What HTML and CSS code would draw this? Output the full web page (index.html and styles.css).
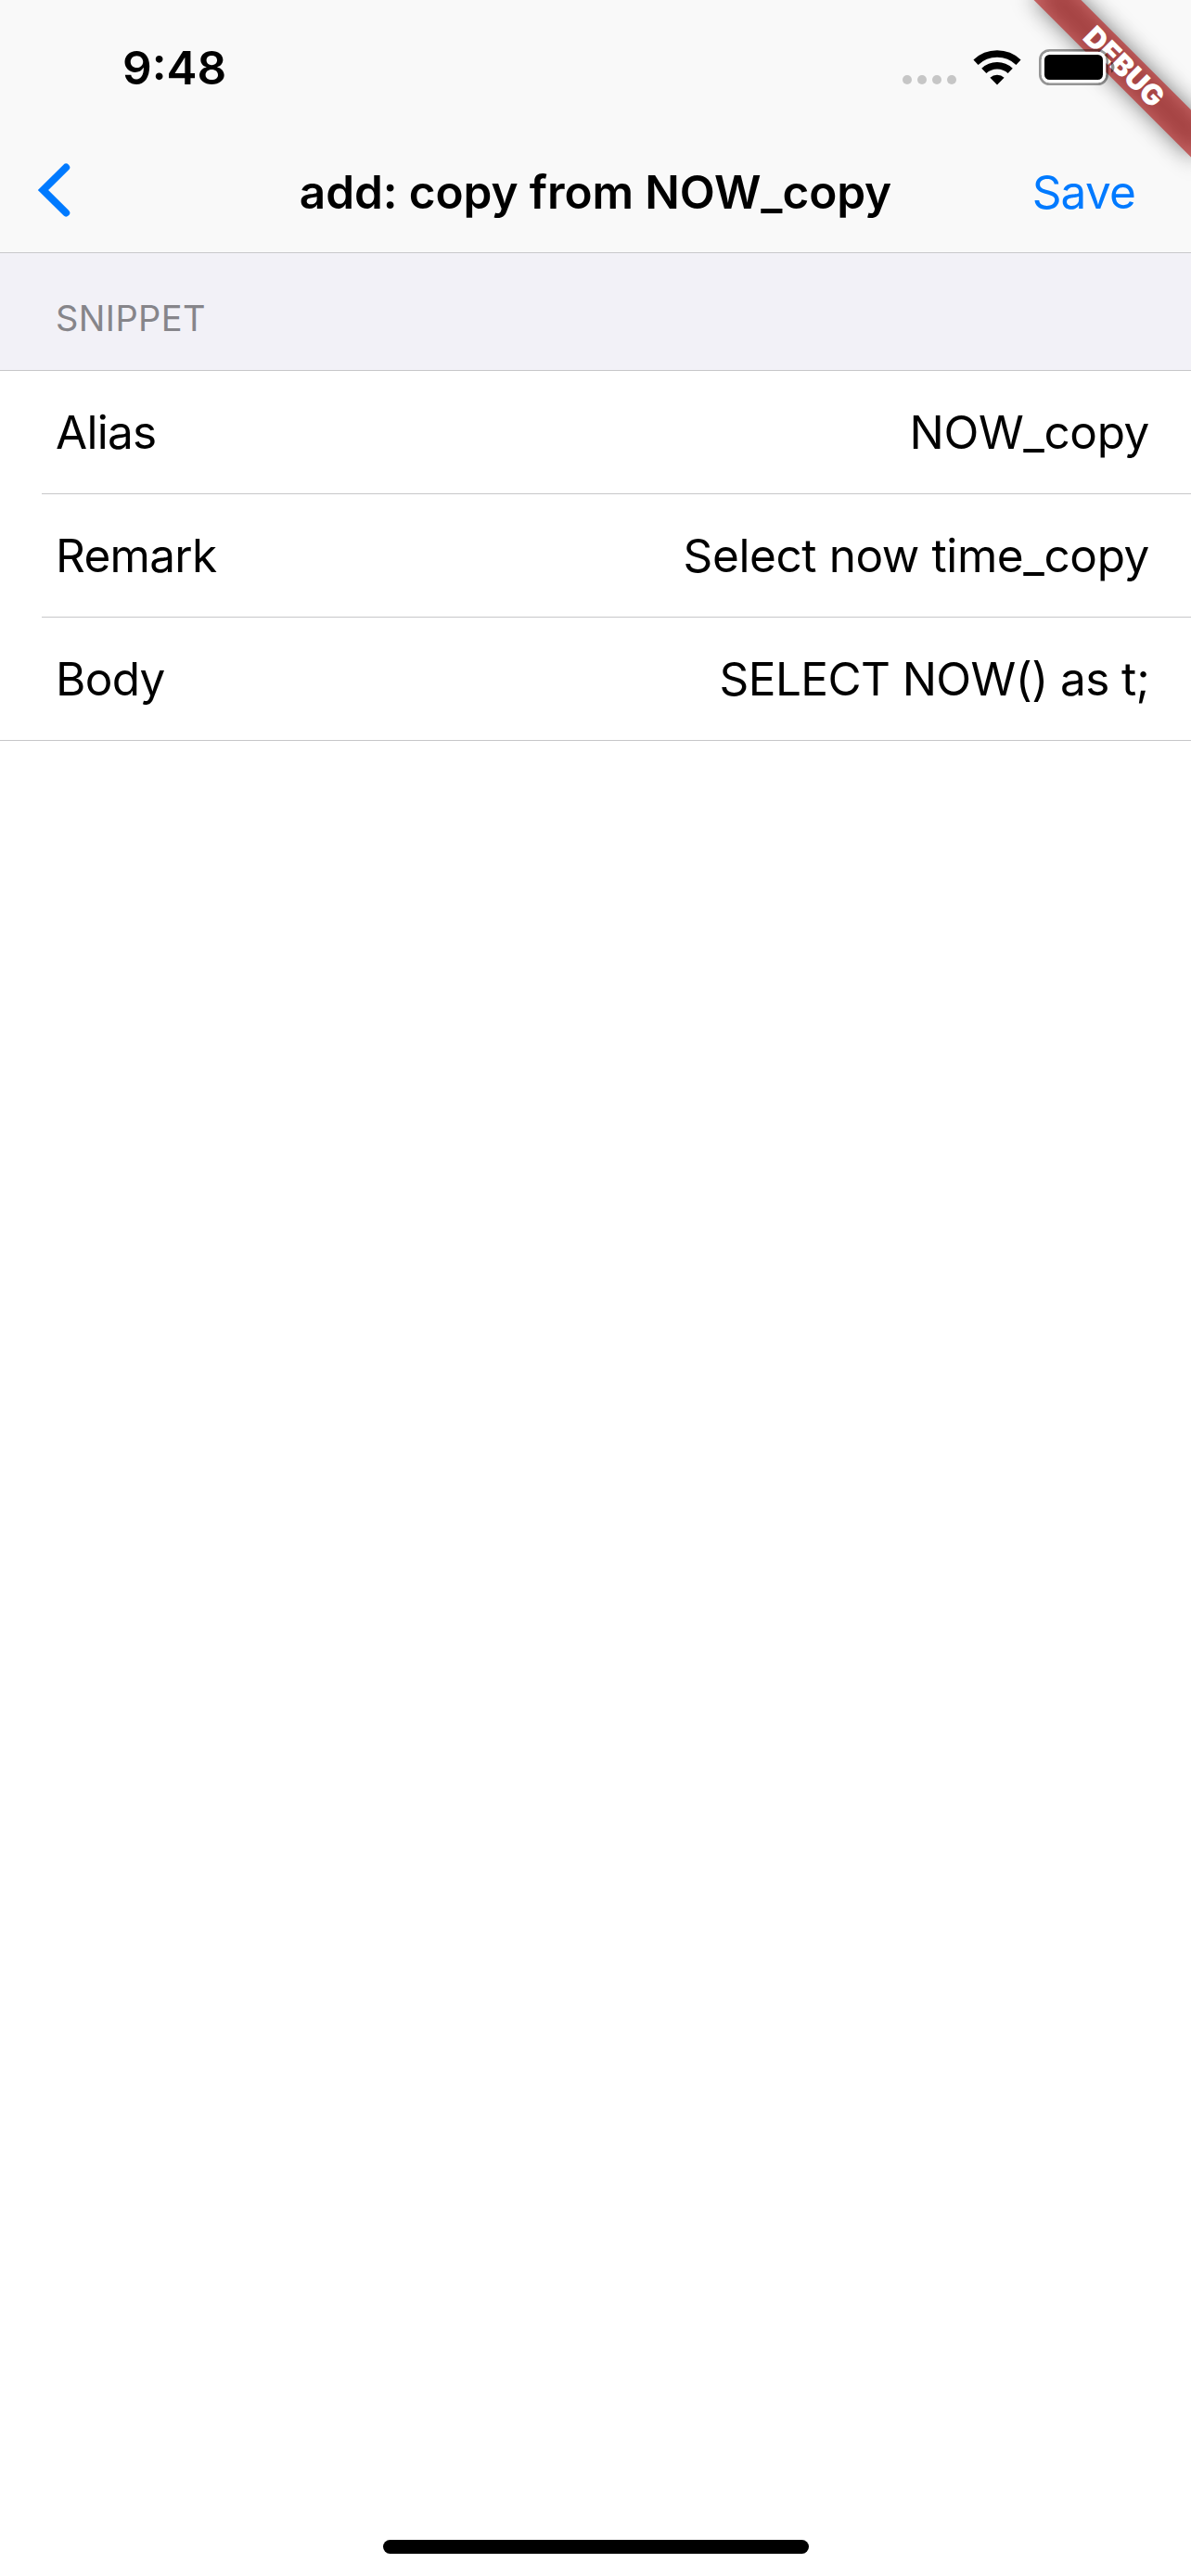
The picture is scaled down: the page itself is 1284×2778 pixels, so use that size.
FILE: index.html
```html
<!DOCTYPE html>
<html lang="en">
<head>
    <meta charset="UTF-8">
    <meta name="viewport" content="width=device-width, initial-scale=1.0">
    <title>add: copy from NOW_copy</title>
    <link rel="stylesheet" href="styles.css">
</head>
<body>
    <div class="screen">
        <header class="top">
            <div class="status-bar">
                <span class="time">9:48</span>
                <div class="status-icons">
                    <svg class="dots" width="58" height="10" viewBox="0 0 58 10" fill="#c6c6c6">
                        <circle cx="5" cy="5" r="5"/>
                        <circle cx="21" cy="5" r="5"/>
                        <circle cx="37" cy="5" r="5"/>
                        <circle cx="53" cy="5" r="5"/>
                    </svg>
                    <svg class="wifi" width="52" height="38" viewBox="0 0 52 38">
                        <path d="M3 13.2a33.4 33.4 0 0 1 46 0M11.8 22.4a20.6 20.6 0 0 1 28.4 0" fill="none" stroke="#000" stroke-width="7.4"/>
                        <path d="M26 37.6l-7.6-7.8a11 11 0 0 1 15.2 0z"/>
                    </svg>
                    <svg class="battery" width="84" height="40" viewBox="0 0 84 40">
                        <rect x="1.4" y="1.4" width="72.2" height="36.2" rx="10" fill="none" stroke="#000" stroke-opacity=".4" stroke-width="2.8"/>
                        <rect x="2.800" y="2.800" width="69.400" height="33.400" rx="8.600" fill="#fff"/>
                        <rect x="6" y="6" width="63" height="27" rx="5.5"/>
                        <path d="M78 13.500c2.400 1 3.500 3.500 3.500 6s-1.100 5-3.500 6z" fill-opacity=".45"/>
                    </svg>
                </div>
            </div>
            <nav class="nav-bar">
                <a class="back" href="#" aria-label="Back">
                    <svg width="36" height="60" viewBox="0 0 36 60">
                        <path d="M31.200 5.500L6.500 30l24.700 24.500" fill="none" stroke="#007aff" stroke-width="8" stroke-linecap="round"/>
                    </svg>
                </a>
                <h1>add: copy from NOW_copy</h1>
                <a class="save" href="#">Save</a>
            </nav>
        </header>

        <h2 class="section-title">SNIPPET</h2>

        <ul class="fields">
            <li class="field">
                <span class="label">Alias</span>
                <span class="value">NOW_copy</span>
            </li>
            <li class="field">
                <span class="label">Remark</span>
                <span class="value">Select now time_copy</span>
            </li>
            <li class="field">
                <span class="label">Body</span>
                <span class="value value-sql">SELECT NOW() as t;</span>
            </li>
        </ul>

        <div class="home-indicator"></div>

        <div class="debug-corner">
            <div class="ribbon-shadow"></div>
            <div class="ribbon">DEBUG</div>
        </div>
    </div>
</body>
</html>
```
FILE: styles.css
```css
* {
    margin: 0;
    padding: 0;
    box-sizing: border-box;
}

body {
    font-family: Inter, "Liberation Sans", sans-serif;
    font-size: 49.5px;
    background: #fff;
    color: #000;
}

a {
    color: #007aff;
    text-decoration: none;
}

.screen {
    position: relative;
    display: flex;
    flex-direction: column;
    height: 2778px;
    overflow: hidden;
}

/* Status bar and navigation */
.top {
    height: 273px;
    background: #f9f9f9;
    border-bottom: 1px solid #c9c9cb;
}

.status-bar {
    display: flex;
    justify-content: space-between;
    height: 141px;
    padding: 43px 80px 0 132px;
}

.time {
    font-weight: 600;
    line-height: 60px;
}

/* Icons stay above the debug ribbon */
.status-icons {
    position: relative;
    z-index: 2;
    display: flex;
    align-items: flex-start;
}

.dots {
    margin: 38px 18px 0 0;
}

.wifi {
    margin: 11px 19px 0 0;
}

.battery {
    margin-top: 10px;
}

.nav-bar {
    display: grid;
    grid-template-columns: 1fr auto 1fr;
    align-items: center;
    height: 131px;
    padding: 0 60px;
}

.back {
    display: flex;
    margin: 0 0 4px -20px;
}

.nav-bar h1 {
    font-size: 49.5px;
    font-weight: 600;
    line-height: 60px;
    letter-spacing: -0.1px;
}

.save {
    text-align: right;
    line-height: 60px;
    letter-spacing: -0.8px;
}

/* Form rows */
.section-title {
    height: 126px;
    padding: 46px 60px 0;
    background: #f2f1f7;
    color: #86858a;
    font-size: 38px;
    font-weight: 400;
    line-height: 48px;
    letter-spacing: 0.4px;
}

.fields {
    list-style: none;
    border-top: 1px solid #c7c7c9;
    border-bottom: 1px solid #c7c7c9;
}

.field {
    display: flex;
    align-items: center;
    justify-content: space-between;
    height: 133px;
    margin-left: 45px;
    padding: 0 45px 0 15px;
    border-bottom: 1px solid #c7c7c9;
    line-height: 60px;
}

.field:last-child {
    height: 132px;
    border-bottom: none;
}

.label {
    letter-spacing: -0.7px;
}

.value {
    letter-spacing: -0.4px;
}

.value-sql {
    letter-spacing: -0.6px;
}

.home-indicator {
    width: 459px;
    height: 15px;
    margin: auto auto 24px;
    border-radius: 8px;
    background: #000;
}

/* Debug ribbon */
.debug-corner {
    position: absolute;
    top: 0;
    right: 0;
    width: 300px;
    height: 300px;
    overflow: hidden;
}

.ribbon,
.ribbon-shadow {
    position: absolute;
    top: 54px;
    right: -48px;
    width: 240px;
    height: 36px;
    transform: rotate(45deg);
}

.ribbon-shadow {
    background: rgba(0, 0, 0, 0.5);
    filter: blur(12px);
}

.ribbon {
    background: rgba(183, 28, 28, 0.63);
    color: #fff;
    font-size: 31px;
    font-weight: 900;
    line-height: 36px;
    text-align: center;
}
```
